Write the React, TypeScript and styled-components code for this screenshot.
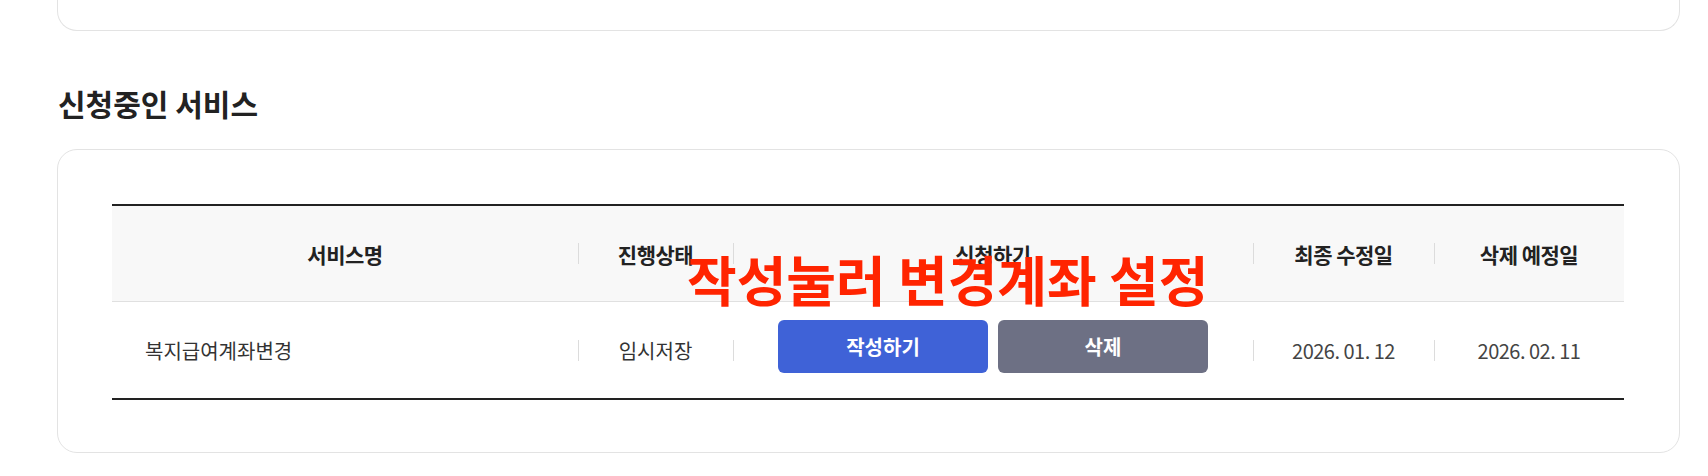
import styled, { createGlobalStyle, css } from "styled-components";

const FONT = `"Noto Sans CJK KR", "Noto Sans", sans-serif`;

const GlobalStyle = createGlobalStyle`
  body {
    margin: 0;
    background: #fff;
    font-family: ${FONT};
    color: #222;
  }
`;

interface Application {
  name: string;
  status: string;
  updatedAt: string;
  deleteAt: string;
}

const applications: Application[] = [
  {
    name: "복지급여계좌변경",
    status: "임시저장",
    updatedAt: "2026. 01. 12",
    deleteAt: "2026. 02. 11",
  },
];

const COLUMNS = "466px 155px 520px 181px 1fr";

const Page = styled.div`
  width: 1623px;
  padding-left: 57px;
`;

// bottom edge of the previous section's card, cut off by the viewport
const PrevCardEdge = styled.div`
  box-sizing: border-box;
  height: 31px;
  border: 1px solid #e3e3e3;
  border-top: none;
  border-radius: 0 0 20px 20px;
`;

const SectionTitle = styled.h2`
  margin: 52px 0 25px 1px;
  font-size: 30px;
  line-height: 41px;
  font-weight: 700;
  letter-spacing: 0;
  color: #222;
`;

const Card = styled.div`
  position: relative;
  box-sizing: border-box;
  border: 1px solid #e3e3e3;
  border-radius: 20px;
  padding: 54px 55px 52px 54px;
`;

const Table = styled.div`
  border-top: 2px solid #222;
  border-bottom: 2px solid #222;
`;

const Row = styled.div<{ $head?: boolean }>`
  box-sizing: border-box;
  display: grid;
  grid-template-columns: ${COLUMNS};
  height: 96px;
  ${(p) =>
    p.$head &&
    css`
      background: #f8f8f8;
      border-bottom: 1px solid #e0e0e0;
    `}
`;

const Cell = styled.div<{ $sep?: boolean; $left?: boolean; $head?: boolean }>`
  display: flex;
  align-items: center;
  justify-content: ${(p) => (p.$left ? "flex-start" : "center")};
  padding-left: ${(p) => (p.$left ? "33px" : "0")};
  white-space: nowrap;
  ${(p) =>
    p.$head
      ? css`
          font-size: 21px;
          font-weight: 700;
          color: #222;
          letter-spacing: -0.5px;
        `
      : css`
          font-size: 20px;
          font-weight: 400;
          color: #333;
          letter-spacing: 0;
        `}
  ${(p) =>
    p.$sep &&
    css`
      background-image: linear-gradient(#dcdcdc, #dcdcdc);
      background-repeat: no-repeat;
      background-position: left center;
      background-size: 1px 21px;
    `}
`;

const DateText = styled.span`
  color: #444;
  letter-spacing: -0.5px;
`;

const ButtonGroup = styled.div`
  display: flex;
  gap: 10px;
  margin-bottom: 7px;
`;

const ActionButton = styled.button<{ $variant: "primary" | "muted" }>`
  width: 210px;
  height: 53px;
  border: none;
  border-radius: 6px;
  background: ${(p) => (p.$variant === "primary" ? "#3f62d7" : "#6d7084")};
  color: #fff;
  font-family: ${FONT};
  font-size: 20px;
  font-weight: 700;
  letter-spacing: 0;
  cursor: pointer;
`;

// red annotation written over the screenshot
const Annotation = styled.div`
  position: absolute;
  left: 629px;
  top: 102px;
  font-size: 54px;
  line-height: 54px;
  font-weight: 700;
  letter-spacing: 0;
  color: #ff2400;
  white-space: nowrap;
  pointer-events: none;
`;

function App() {
  return (
    <>
      <GlobalStyle />
      <Page>
        <PrevCardEdge />
        <SectionTitle>신청중인 서비스</SectionTitle>
        <Card>
          <Table>
            <Row $head>
              <Cell $head>서비스명</Cell>
              <Cell $head $sep>
                진행상태
              </Cell>
              <Cell $head $sep>
                신청하기
              </Cell>
              <Cell $head $sep>
                최종 수정일
              </Cell>
              <Cell $head $sep>
                삭제 예정일
              </Cell>
            </Row>
            {applications.map((item) => (
              <Row key={item.name}>
                <Cell $left>{item.name}</Cell>
                <Cell $sep>{item.status}</Cell>
                <Cell $sep>
                  <ButtonGroup>
                    <ActionButton $variant="primary">작성하기</ActionButton>
                    <ActionButton $variant="muted">삭제</ActionButton>
                  </ButtonGroup>
                </Cell>
                <Cell $sep>
                  <DateText>{item.updatedAt}</DateText>
                </Cell>
                <Cell $sep>
                  <DateText>{item.deleteAt}</DateText>
                </Cell>
              </Row>
            ))}
          </Table>
          <Annotation>작성눌러 변경계좌 설정</Annotation>
        </Card>
      </Page>
    </>
  );
}

export default App;
